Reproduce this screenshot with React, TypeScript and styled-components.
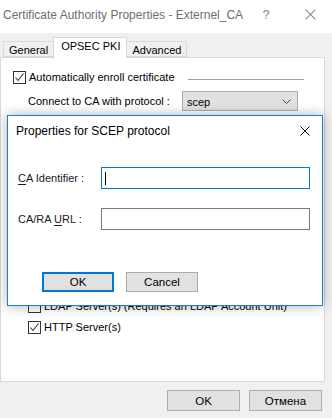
import React from "react";
import styled, { createGlobalStyle } from "styled-components";

const FONT = `"Liberation Sans", Arial, sans-serif`;

const CheckMark = () => (
  <svg width="11" height="11" viewBox="0 0 11 11">
    <polyline points="1.5,5.5 4,8.5 9.5,1.5" fill="none" stroke="#333" strokeWidth="1.1" />
  </svg>
);

const CloseGlyph = ({ color = "#000", size = 10 }: { color?: string; size?: number }) => (
  <svg width={size} height={size} viewBox="0 0 10 10">
    <path d="M0.5 0.5 L9.5 9.5 M9.5 0.5 L0.5 9.5" stroke={color} strokeWidth="1" fill="none" />
  </svg>
);

const Checkbox = ({ checked }: { checked?: boolean }) => (
  <Box>{checked && <CheckMark />}</Box>
);

const App = () => {
  return (
    <>
      <GlobalStyle />
      <Window>
        <TitleBar>
          <TitleText>Certificate Authority Properties - Externel_CA</TitleText>
          <HelpMark>?</HelpMark>
          <TitleClose>
            <CloseGlyph color="#8a8a8a" size={11} />
          </TitleClose>
        </TitleBar>

        <TabStrip>
          <Tab>General</Tab>
          <Tab $active>OPSEC PKI</Tab>
          <Tab>Advanced</Tab>
        </TabStrip>

        <Panel>
          <EnrollRow>
            <Checkbox checked />
            <Label>Automatically enroll certificate</Label>
            <GroupLine />
          </EnrollRow>
          <ProtocolRow>
            <ProtocolLabel>Connect to CA with protocol :</ProtocolLabel>
            <Select>
              <span>scep</span>
              <svg width="9" height="5" viewBox="0 0 9 5">
                <polyline points="0.5,0.5 4.5,4.5 8.5,0.5" fill="none" stroke="#444" strokeWidth="1" />
              </svg>
            </Select>
          </ProtocolRow>
          <ServerList>
            <CheckRow>
              <Checkbox />
              <Label>LDAP Server(s) (Requires an LDAP Account Unit)</Label>
            </CheckRow>
            <CheckRow>
              <Checkbox checked />
              <Label>HTTP Server(s)</Label>
            </CheckRow>
          </ServerList>
        </Panel>

        <ButtonBar>
          <Button $width={73} $height={21}>OK</Button>
          <Button $width={73} $height={21}>Отмена</Button>
        </ButtonBar>

        <Dialog>
          <DialogTitle>
            <span>Properties for SCEP protocol</span>
            <CloseGlyph />
          </DialogTitle>
          <FormGrid>
            <FieldLabel>
              <u>C</u>A Identifier :
            </FieldLabel>
            <Field $focused>
              <Caret />
            </Field>
            <FieldLabel>
              CA/RA <u>U</u>RL :
            </FieldLabel>
            <Field />
          </FormGrid>
          <DialogButtons>
            <Button $width={72} $height={20} $default>OK</Button>
            <Button $width={72} $height={20}>Cancel</Button>
          </DialogButtons>
        </Dialog>
      </Window>
    </>
  );
};

export default App;

/* ---------------------------------- styles --------------------------------- */

const GlobalStyle = createGlobalStyle`
  html, body {
    margin: 0;
    padding: 0;
    background: #f0f0f0;
  }
  * {
    box-sizing: border-box;
  }
`;

const Window = styled.div`
  position: relative;
  width: 332px;
  height: 418px;
  background: #f0f0f0;
  font-family: ${FONT};
  font-size: 11px;
  color: #000;
  overflow: hidden;
`;

const TitleBar = styled.div`
  height: 33px;
  background: #fff;
  display: flex;
  align-items: flex-start;
  padding: 7px 0 0 3px;
`;

const TitleText = styled.div`
  font-size: 12px;
  line-height: 16px;
  color: #6f6f6f;
  flex: 1;
  white-space: nowrap;
`;

const HelpMark = styled.div`
  font-size: 13px;
  line-height: 16px;
  color: #8a8a8a;
  width: 10px;
  text-align: center;
  margin-right: 34px;
`;

const TitleClose = styled.div`
  margin: 2px 16px 0 0;
  display: flex;
`;

const TabStrip = styled.div`
  display: flex;
  align-items: flex-end;
  height: 24px;
  padding: 4px 0 0 3px;
`;

const Tab = styled.div<{ $active?: boolean }>`
  position: relative;
  z-index: ${(p) => (p.$active ? 1 : 0)};
  height: ${(p) => (p.$active ? 21 : 16)}px;
  margin-bottom: ${(p) => (p.$active ? -1 : 0)}px;
  margin-left: -1px;
  padding: ${(p) => (p.$active ? "2px 6px 0 7px" : "2px 5px 0 5px")};
  background: ${(p) => (p.$active ? "#fff" : "#f0f0f0")};
  border: 1px solid #d9d9d9;
  border-bottom: ${(p) => (p.$active ? "none" : "1px solid #d9d9d9")};
  font-size: 11px;
  line-height: 12px;
  white-space: nowrap;

  &:first-child {
    margin-left: 0;
  }
`;

const Panel = styled.div`
  width: 325px;
  height: 325px;
  background: #fff;
  border: 1px solid #d9d9d9;
  padding: 13px 0 0 12px;
`;

const Box = styled.span`
  width: 13px;
  height: 13px;
  flex: none;
  border: 1px solid #333;
  background: #fff;
  display: flex;
  align-items: center;
  justify-content: center;
`;

const Label = styled.span`
  margin-left: 3px;
  line-height: 13px;
  white-space: nowrap;
`;

const CheckRow = styled.div`
  display: flex;
  align-items: center;
  height: 13px;
`;

const EnrollRow = styled(CheckRow)`
  padding-right: 20px;
`;

const GroupLine = styled.div`
  flex: 1;
  margin: 3px 0 0 13px;
  border-top: 1px solid #a0a0a0;
`;

const ProtocolRow = styled.div`
  display: flex;
  align-items: center;
  margin: 7px 0 0 15px;
`;

const ProtocolLabel = styled.span`
  width: 154px;
  white-space: nowrap;
`;

const Select = styled.div`
  width: 116px;
  height: 20px;
  background: #e1e1e1;
  border: 1px solid #adadad;
  display: flex;
  align-items: center;
  justify-content: space-between;
  padding: 2px 6px 0 4px;

  svg {
    margin-top: -1px;
  }
`;

const ServerList = styled.div`
  margin: 189px 0 0 15px;
  display: flex;
  flex-direction: column;
  gap: 8px;
`;

const ButtonBar = styled.div`
  display: flex;
  justify-content: flex-end;
  gap: 9px;
  padding: 8px 10px 0 0;
`;

const Button = styled.div<{ $width: number; $height: number; $default?: boolean }>`
  width: ${(p) => p.$width}px;
  height: ${(p) => p.$height}px;
  background: #e1e1e1;
  border: ${(p) => (p.$default ? "2px solid #0078d7" : "1px solid #adadad")};
  display: flex;
  align-items: center;
  justify-content: center;
  font-size: 11.5px;
`;

const Dialog = styled.div`
  position: absolute;
  left: 7px;
  top: 115px;
  width: 316px;
  height: 191px;
  background: #fff;
  border: 1px solid #1a7fd4;
  box-shadow: 0 0 12px rgba(0, 0, 0, 0.3);
`;

const DialogTitle = styled.div`
  height: 29px;
  display: flex;
  align-items: center;
  justify-content: space-between;
  padding: 1px 12px 0 8px;
  font-size: 12px;
`;

const FormGrid = styled.div`
  display: grid;
  grid-template-columns: 83px 1fr;
  row-gap: 19px;
  align-items: center;
  margin-top: 22px;
  padding: 0 12px 0 10px;
`;

const FieldLabel = styled.span`
  white-space: nowrap;
  color: #1a1a1a;

  u {
    text-decoration-thickness: 1px;
    text-underline-offset: 2px;
  }
`;

const Field = styled.div<{ $focused?: boolean }>`
  height: 22px;
  border: 1px solid ${(p) => (p.$focused ? "#0078d7" : "#7a7a7a")};
  background: #fff;
  display: flex;
  align-items: center;
  padding-left: 3px;
`;

const Caret = styled.span`
  width: 1px;
  height: 13px;
  background: #000;
`;

const DialogButtons = styled.div`
  display: flex;
  gap: 12px;
  margin-top: 42px;
  padding-left: 34px;
`;
